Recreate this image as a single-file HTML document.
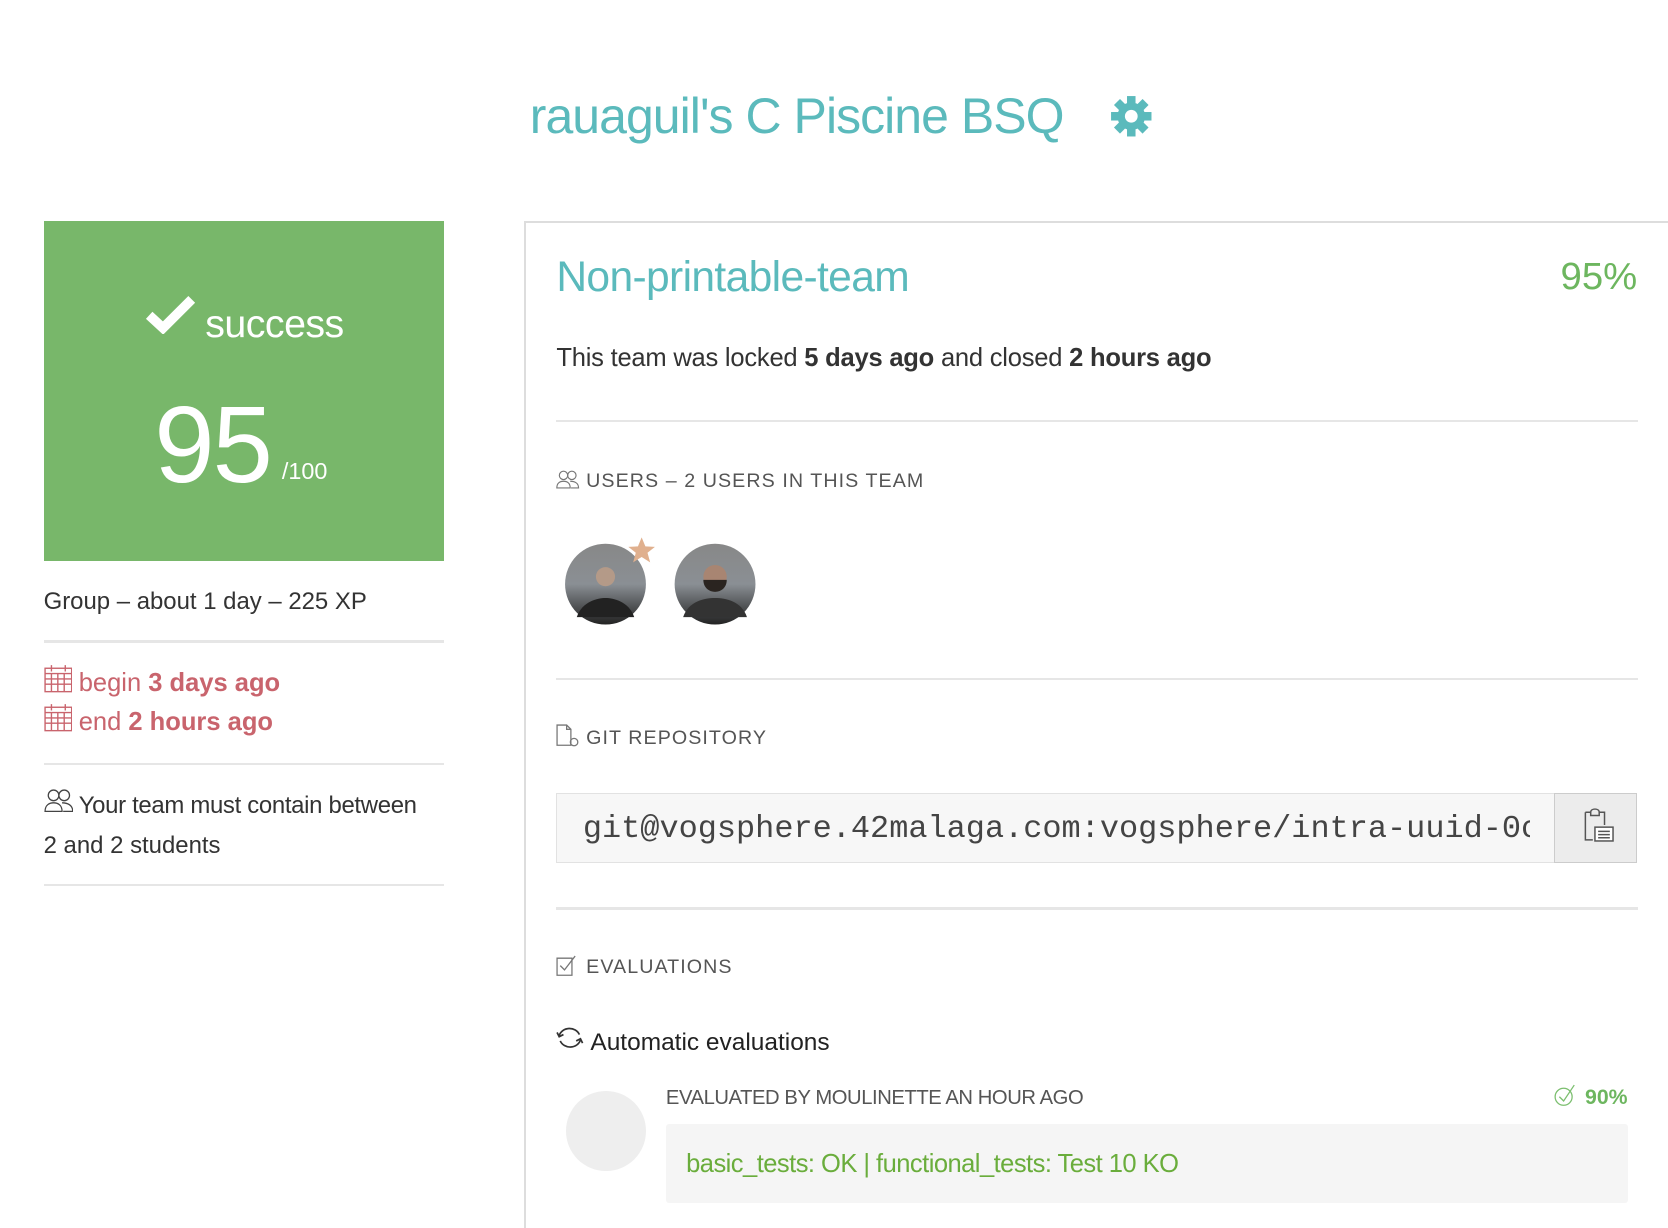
<!DOCTYPE html>
<html><head><meta charset="utf-8"><style>
html,body{margin:0;padding:0;background:#fff;width:1668px;height:1228px;overflow:hidden}
#w{zoom:1.06378;position:relative;width:1568px;height:1155px;font-family:"Liberation Sans",sans-serif;color:#333}
.a{position:absolute;white-space:nowrap}
.hr{position:absolute;height:2px;background:#e6e6e6}
.cap{font-size:18.5px;letter-spacing:1px;color:#555}
</style></head><body><div id="w">
<div class="a" style="left:498px;top:80px;font-size:47px;color:#5bbabc;line-height:60px;letter-spacing:-0.9px">rauaguil's C Piscine BSQ</div>
<svg class="a" style="left:1043px;top:89px" width="40" height="40" viewBox="0 0 40 40"><g fill="#5bbabc"><rect x="16" y="1" width="8" height="38"/><rect x="1" y="16" width="38" height="8"/><rect x="16" y="1" width="8" height="38" transform="rotate(45 20 20)"/><rect x="16" y="1" width="8" height="38" transform="rotate(-45 20 20)"/><circle cx="20" cy="20" r="13"/></g><circle cx="20" cy="20" r="6" fill="#fff"/></svg>

<div class="a" style="left:41px;top:208px;width:376px;height:319px;background:#78b76a;color:#fff">
<svg class="a" style="left:96px;top:68px" width="46" height="38" viewBox="0 0 46 38"><path d="M3 20 L16 32 L43 5" stroke="#fff" stroke-width="9" fill="none"/></svg>
<div class="a" style="left:152px;top:74px;font-size:37px;line-height:46px;letter-spacing:-0.5px">success</div>
<div class="a" style="left:104px;top:150px;font-size:102px;line-height:120px;letter-spacing:-2px">95</div>
<div class="a" style="left:224px;top:222px;font-size:22px;line-height:28px">/100</div>
</div>
<div class="a" style="left:41px;top:551px;font-size:22.5px;line-height:30px">Group – about 1 day – 225 XP</div>
<div class="hr" style="left:41px;top:602px;width:376px"></div>
<svg class="a" style="left:41px;top:624px" width="27" height="27" viewBox="0 0 27 27"><g stroke="#c9646d" fill="none" stroke-width="1.3"><rect x="1" y="4" width="25" height="22"/><path d="M1 9h25M1 14h25M1 19h25M7 9v17M13 9v17M19 9v17M7 1v6M20 1v6"/></g></svg>
<div class="a" style="left:74px;top:628px;font-size:24px;line-height:30px;color:#c9646d">begin <b>3 days ago</b></div>
<svg class="a" style="left:41px;top:661px" width="27" height="27" viewBox="0 0 27 27"><g stroke="#c9646d" fill="none" stroke-width="1.3"><rect x="1" y="4" width="25" height="22"/><path d="M1 9h25M1 14h25M1 19h25M7 9v17M13 9v17M19 9v17M7 1v6M20 1v6"/></g></svg>
<div class="a" style="left:74px;top:665px;font-size:24px;line-height:30px;color:#c9646d">end <b>2 hours ago</b></div>
<div class="hr" style="left:41px;top:717px;width:376px"></div>
<svg class="a" style="left:41px;top:742px" width="28" height="22" viewBox="0 0 28 22"><g stroke="#444" fill="none" stroke-width="1.2"><circle cx="9" cy="6" r="5"/><path d="M1 21c0-6 4-8 8-8s8 2 8 8z"/><circle cx="19" cy="6" r="5"/><path d="M17 13c5 0 10 2 10 8h-9"/></g></svg>
<div class="a" style="left:74px;top:743px;font-size:22.5px;line-height:30px;letter-spacing:-0.3px">Your team must contain between</div>
<div class="a" style="left:41px;top:780px;font-size:22.5px;line-height:30px">2 and 2 students</div>
<div class="hr" style="left:41px;top:831px;width:376px"></div>

<div class="a" style="left:493px;top:208px;width:1075px;height:960px;border-left:2px solid #ddd;border-top:2px solid #ddd"></div>
<div class="a" style="left:523px;top:236px;font-size:40px;line-height:50px;color:#5bbabc;letter-spacing:-0.6px">Non-printable-team</div>
<div class="a" style="right:29px;top:238px;font-size:36px;line-height:46px;color:#6db65f">95%</div>
<div class="a" style="left:523px;top:321px;font-size:24px;line-height:32px;letter-spacing:-0.2px">This team was locked <b>5 days ago</b> and closed <b>2 hours ago</b></div>
<div class="hr" style="left:523px;top:395px;width:1017px"></div>
<svg class="a" style="left:523px;top:442px" width="22" height="18" viewBox="0 0 28 22"><g stroke="#777" fill="none" stroke-width="1.4"><circle cx="9" cy="6" r="5"/><path d="M1 21c0-6 4-8 8-8s8 2 8 8z"/><circle cx="19" cy="6" r="5"/><path d="M17 13c5 0 10 2 10 8h-9"/></g></svg>
<div class="a cap" style="left:551px;top:440px;line-height:26px">USERS – 2 USERS IN THIS TEAM</div>
<svg class="a" style="left:530px;top:500px" width="200" height="90" viewBox="0 0 200 90"><defs><linearGradient id="g1" x1="0" y1="0" x2="0" y2="1"><stop offset="0" stop-color="#888"/><stop offset=".5" stop-color="#8a8f94"/><stop offset="1" stop-color="#222"/></linearGradient></defs>
<circle cx="39" cy="49" r="38" fill="url(#g1)"/><circle cx="39" cy="42" r="9" fill="#b49a88"/><path d="M12 80c5-15 20-18 27-18s22 3 27 18z" fill="#222"/>
<circle cx="142" cy="49" r="38" fill="url(#g1)"/><circle cx="142" cy="42" r="11" fill="#a88572"/><path d="M131 45c0 15 22 15 22 0z" fill="#2a2420"/><path d="M112 80c5-15 20-18 30-18s25 3 30 18z" fill="#333"/>
<path d="M73 5l3.5 8.5 9 .5-7 5.5 2.5 9-8-5-8 5 2.5-9-7-5.5 9-.5z" fill="#e0b08e"/></svg>
<div class="hr" style="left:523px;top:637px;width:1017px"></div>
<svg class="a" style="left:523px;top:681px" width="22" height="22" viewBox="0 0 22 22"><g stroke="#777" fill="none" stroke-width="1.2"><path d="M1 1h9l4 4v15H1zM10 1v4h4"/><circle cx="17" cy="17" r="3.5"/></g></svg>
<div class="a cap" style="left:551px;top:682px;line-height:26px">GIT REPOSITORY</div>
<div class="a" style="left:523px;top:745px;width:938px;height:64px;background:#f7f7f7;border:1px solid #e2e2e2;overflow:hidden"><div class="a" style="left:24px;top:16px;font-family:'Liberation Mono',monospace;font-size:30px;line-height:34px;color:#444;width:890px;overflow:hidden">git@vogsphere.42malaga.com:vogsphere/intra-uuid-0c</div></div>
<div class="a" style="left:1461px;top:745px;width:76px;height:64px;background:#ececec;border:1px solid #ccc"></div>
<svg class="a" style="left:1484px;top:760px" width="34" height="34" viewBox="0 0 34 34"><g stroke="#555" fill="none" stroke-width="1.4"><path d="M6 4h5M19 4h5v12M6 4v26h7"/><path d="M11 4c0-4 8-4 8 0v3h-8z"/><rect x="15" y="18" width="17" height="13" fill="#fff"/><path d="M18 22h11M18 25h11M18 28h11"/></g></svg>
<div class="hr" style="left:523px;top:853px;width:1017px"></div>
<svg class="a" style="left:523px;top:898px" width="20" height="20" viewBox="0 0 20 20"><g stroke="#777" fill="none" stroke-width="1.2"><path d="M1 3h14v16H1z"/><path d="M4 10l4 4 10-13"/></g></svg>
<div class="a cap" style="left:551px;top:897px;line-height:26px">EVALUATIONS</div>
<svg class="a" style="left:523px;top:964px" width="26" height="24" viewBox="0 0 26 24"><g stroke="#333" fill="none" stroke-width="1.6"><path d="M3 10a10 9 0 0 1 19-1"/><path d="M23 14a10 9 0 0 1-19 1"/><path d="M1 7l2 4 4-2M25 17l-2-4-4 2"/></g></svg>
<div class="a" style="left:555px;top:965px;font-size:23px;line-height:30px;color:#222">Automatic evaluations</div>
<div class="a" style="left:532px;top:1026px;width:75px;height:75px;border-radius:50%;background:#eeeeee"></div>
<div class="a" style="left:626px;top:1020px;font-size:19px;line-height:26px;color:#555;letter-spacing:-0.4px">EVALUATED BY MOULINETTE AN HOUR AGO</div>
<svg class="a" style="left:1460px;top:1019px" width="22" height="22" viewBox="0 0 22 22"><g stroke="#7cbf6f" fill="none" stroke-width="1.2"><circle cx="10" cy="12" r="8"/><path d="M6 12l4 4 10-15"/></g></svg>
<div class="a" style="right:38px;top:1019px;font-size:20px;line-height:26px;color:#6db65f;font-weight:bold">90%</div>
<div class="a" style="left:626px;top:1057px;width:904px;height:74px;background:#f5f5f5;border-radius:3px"></div>
<div class="a" style="left:645px;top:1080px;font-size:24px;line-height:30px;color:#6aad3c;letter-spacing:-0.5px">basic_tests: OK | functional_tests: Test 10 KO</div>
</div></body></html>
